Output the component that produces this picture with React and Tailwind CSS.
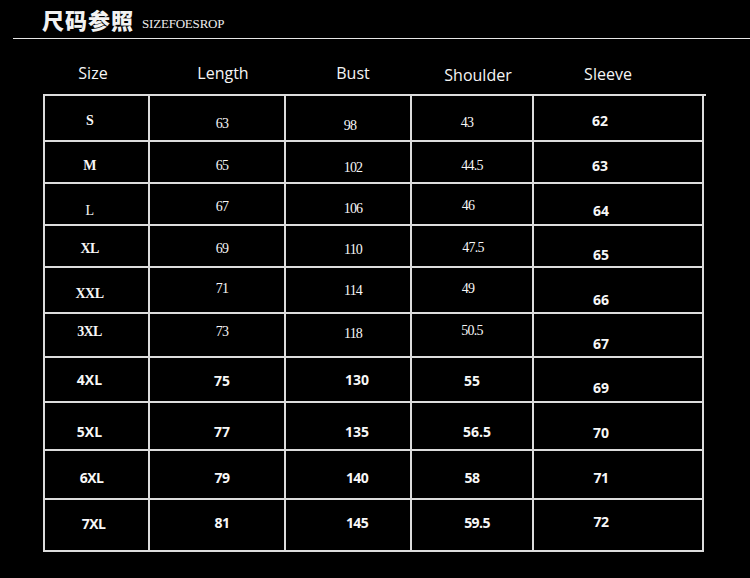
const serif = "font-['Liberation_Serif',serif] text-[14px] tracking-[-0.8px]"
const serifB = "font-['Liberation_Serif',serif] text-[14px] font-bold tracking-[-0.6px]"
const sans = "font-['Open_Sans',sans-serif] text-[14px] font-bold"
const cond = "font-['Open_Sans',sans-serif] text-[14px] font-bold tracking-[-0.6px]"

const rows = [
  [
    { t: 'S', f: serifB, c: 'pt-[6px] pr-[14px]' },
    { t: '63', f: serif, c: 'pt-[12px] pl-[10px]' },
    { t: '98', f: serif, c: 'pt-[16px] pl-[4px]' },
    { t: '43', f: serif, c: 'pt-[10px] pr-[10px]' },
    { t: '62', f: sans, c: 'pt-[6px] pr-[36px]' },
  ],
  [
    { t: 'M', f: serifB, c: 'pt-[8px] pr-[14px]' },
    { t: '65', f: serif, c: 'pt-[8px] pl-[10px]' },
    { t: '102', f: serif, c: 'pt-[12px] pl-[10px]' },
    { t: '44.5', f: serif, c: 'pt-[8px]' },
    { t: '63', f: sans, c: 'pt-[8px] pr-[36px]' },
  ],
  [
    { t: 'L', f: serif, c: 'pt-[14px] pr-[14px]' },
    { t: '67', f: serif, c: 'pt-[6px] pl-[10px]' },
    { t: '106', f: serif, c: 'pt-[10px] pl-[10px]' },
    { t: '46', f: serif, c: 'pt-[4px] pr-[8px]' },
    { t: '64', f: sans, c: 'pt-[14px] pr-[34px]' },
  ],
  [
    { t: 'XL', f: serifB, c: 'pt-[6px] pr-[14px]' },
    { t: '69', f: serif, c: 'pt-[6px] pl-[10px]' },
    { t: '110', f: serif, c: 'pt-[8px] pl-[10px]' },
    { t: '47.5', f: serif, c: 'pt-[4px] pl-[2px]' },
    { t: '65', f: sans, c: 'pt-[18px] pr-[34px]' },
  ],
  [
    { t: 'XXL', f: serifB, c: 'pt-[8px] pr-[14px]' },
    { t: '71', f: serif, c: 'pb-[2px] pl-[10px]' },
    { t: '114', f: serif, c: 'pt-[2px] pl-[10px]' },
    { t: '49', f: serif, c: 'pb-[2px] pr-[8px]' },
    { t: '66', f: sans, c: 'pt-[20px] pr-[34px]' },
  ],
  [
    { t: '3XL', f: serifB, c: 'pb-[6px] pr-[14px]' },
    { t: '73', f: serif, c: 'pb-[6px] pl-[10px]' },
    { t: '118', f: serif, c: 'pb-[2px] pl-[10px]' },
    { t: '50.5', f: serif, c: 'pb-[8px]' },
    { t: '67', f: sans, c: 'pt-[18px] pr-[34px]' },
  ],
  [
    { t: '4XL', f: sans, c: 'pr-[14px]' },
    { t: '75', f: sans, c: 'pt-[2px] pl-[10px]' },
    { t: '130', f: sans, c: 'pl-[18px]' },
    { t: '55', f: sans, c: 'pt-[2px]' },
    { t: '69', f: sans, c: 'pt-[16px] pr-[34px]' },
  ],
  [
    { t: '5XL', f: sans, c: 'pt-[12px] pr-[14px]' },
    { t: '77', f: sans, c: 'pt-[12px] pl-[10px]' },
    { t: '135', f: sans, c: 'pt-[12px] pl-[18px]' },
    { t: '56.5', f: sans, c: 'pt-[12px] pl-[10px]' },
    { t: '70', f: sans, c: 'pt-[14px] pr-[34px]' },
  ],
  [
    { t: '6XL', f: cond, c: 'pt-[6px] pr-[10px]' },
    { t: '79', f: cond, c: 'pt-[6px] pl-[10px]' },
    { t: '140', f: cond, c: 'pt-[6px] pl-[18px]' },
    { t: '58', f: cond, c: 'pt-[6px]' },
    { t: '71', f: cond, c: 'pt-[6px] pr-[34px]' },
  ],
  [
    { t: '7XL', f: cond, c: 'pb-[2px] pr-[6px]' },
    { t: '81', f: cond, c: 'pb-[4px] pl-[10px]' },
    { t: '145', f: cond, c: 'pb-[4px] pl-[18px]' },
    { t: '59.5', f: cond, c: 'pb-[4px] pl-[10px]' },
    { t: '72', f: cond, c: 'pb-[6px] pr-[34px]' },
  ],
]

const heads = [
  { t: 'Size', c: 'pr-[9px] pt-[12px]' },
  { t: 'Length', c: 'pl-[10px] pt-[12px]' },
  { t: 'Bust', c: 'pl-[8px] pt-[12px]' },
  { t: 'Shoulder', c: 'pl-[10px] pt-[16px]' },
  { t: 'Sleeve', c: 'pr-[22px] pt-[14px]' },
]

const cols = 'grid grid-cols-[105px_136px_126px_122px_170px]'

export default function App() {
  return (
    <div className="w-[750px] h-[578px] bg-black text-white overflow-hidden">
      {/* Title */}
      <div className="h-[38px] flex items-end pb-[8px] pl-[42px] gap-[8px]">
        <span className="font-['Noto_Sans_CJK_SC',sans-serif] font-black text-[22px] leading-none tracking-[1px] text-[#f2f2f2]">
          尺码参照
        </span>
        <span className="font-['Liberation_Serif',serif] text-[13px] leading-none tracking-[-0.2px] text-[#eeeeee]">
          SIZEFOESROP
        </span>
      </div>
      <div className="ml-[13px] h-px bg-[#e6e6e6]" />

      {/* Column heads */}
      <div className={`${cols} ml-[45px] h-[55px]`}>
        {heads.map((h) => (
          <div
            key={h.t}
            className={`flex items-center justify-center font-['Open_Sans',sans-serif] text-[16px] text-[#f5f5f5] ${h.c}`}
          >
            {h.t}
          </div>
        ))}
      </div>

      {/* Table */}
      <div
        className={`${cols} grid-rows-[46px_42px_42px_42px_46px_44px_45px_48px_49px_52px] ml-[43px] w-[663px] border-l-2 border-t-2 border-[#dcdcdc]`}
      >
        {rows.map((row, i) =>
          row.map((cell, j) => (
            <div
              key={`${i}-${j}`}
              className={`flex items-center justify-center border-r-2 border-b-2 border-[#dcdcdc] leading-none text-[#f7f7f7] ${cell.f} ${cell.c}`}
            >
              {cell.t}
            </div>
          ))
        )}
      </div>
    </div>
  )
}
